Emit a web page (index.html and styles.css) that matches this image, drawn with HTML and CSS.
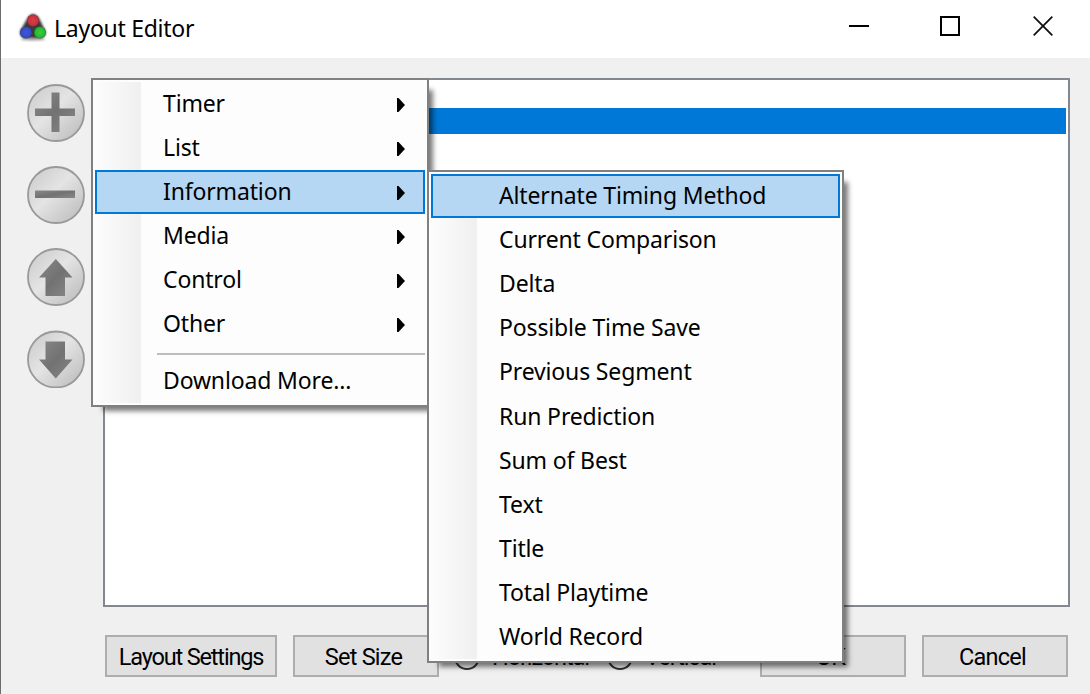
FILE: index.html
```
<!DOCTYPE html>
<html lang="en">
<head>
<meta charset="utf-8">
<title>Layout Editor</title>
<link rel="stylesheet" href="styles.css">
</head>
<body>
<div class="window">
  <header class="titlebar">
    <svg class="logo" width="30" height="32" viewBox="0 0 30 32">
      <defs>
        <filter id="soft"><feGaussianBlur stdDeviation="0.8"/></filter>
        <radialGradient id="red"><stop offset="0" stop-color="#dc3e48"/><stop offset=".8" stop-color="#c8323c"/><stop offset="1" stop-color="#8c2c32"/></radialGradient>
        <radialGradient id="blue"><stop offset="0" stop-color="#4058d8"/><stop offset=".8" stop-color="#344cc4"/><stop offset="1" stop-color="#2c3a88"/></radialGradient>
        <radialGradient id="green"><stop offset="0" stop-color="#35d03c"/><stop offset=".8" stop-color="#28b832"/><stop offset="1" stop-color="#247c2a"/></radialGradient>
      </defs>
      <path d="M5 25H25L27 28Q15 30 3 28Z" fill="#888" opacity=".6" filter="url(#soft)"/>
      <path d="M7 26H23Q29 24 27.500 19L21 6Q18 2 15 2Q12 2 9.500 6L2 19Q1 25 7 26Z" fill="#3a3a3a" filter="url(#soft)"/>
      <circle cx="15" cy="8.500" r="6" fill="url(#red)"/>
      <circle cx="8" cy="20.500" r="6" fill="url(#blue)"/>
      <circle cx="22" cy="20.500" r="6" fill="url(#green)"/>
    </svg>
    <h1 class="title">Layout Editor</h1>
    <div class="controls">
      <svg width="20" height="20" viewBox="0 0 20 20"><path d="M0 10H20" stroke="#000" stroke-width="2"/></svg>
      <svg width="20" height="20" viewBox="0 0 20 20"><path d="M1 1H19V19H1Z" fill="none" stroke="#000" stroke-width="2"/></svg>
      <svg width="20" height="20" viewBox="0 0 20 20"><path d="M.7 .7L19.300 19.300M19.300 .7L.7 19.300" stroke="#111" stroke-width="1.800"/></svg>
    </div>
  </header>
  <main class="body">
    <nav class="tools">
      <svg class="tool" viewBox="0 0 58 58">
        <defs>
          <linearGradient id="face" x1="0" y1="0" x2="1" y2="1"><stop offset="0" stop-color="#c8c8c8"/><stop offset=".45" stop-color="#e4e4e4"/><stop offset="1" stop-color="#b8b8b8"/></linearGradient>
          <linearGradient id="glyph" x1="0" y1="0" x2="1" y2="1"><stop offset="0" stop-color="#888"/><stop offset=".5" stop-color="#727272"/><stop offset="1" stop-color="#888"/></linearGradient>
        </defs>
        <circle class="disc" cx="29" cy="29" r="28"/><path class="glyph" d="M24.500 8.500H32.500V24.500H48V32H32.500V48H24.500V32H8V24.500H24.500Z"/>
      </svg>
      <svg class="tool" viewBox="0 0 58 58"><circle class="disc" cx="29" cy="29" r="28"/><path class="glyph" d="M8 24.500H48V32H8Z"/></svg>
      <svg class="tool" viewBox="0 0 58 58"><circle class="disc" cx="29" cy="29" r="28"/><path class="glyph" d="M28.800 11L45.500 29.500H38V48H18.500V29.500H12Z"/></svg>
      <svg class="tool" viewBox="0 0 58 58"><circle class="disc" cx="29" cy="29.500" r="28"/><path class="glyph" d="M18.500 11.500H38V29.500H45.500L28.800 48.500L12 29.500H18.500Z"/></svg>
    </nav>
    <section class="main">
      <div class="listbox"><div class="selected"></div></div>
      <footer class="footer">
        <button class="btn wide"><span>Layout Settings</span></button>
        <button class="btn"><span>Set Size</span></button>
        <div class="radios">
          <label class="radio"><i></i><span>Horizontal</span></label>
          <label class="radio"><i></i><span>Vertical</span></label>
        </div>
        <button class="btn"><span>OK</span></button>
        <button class="btn"><span>Cancel</span></button>
      </footer>
    </section>
  </main>

  <div class="menu menu-root">
    <div class="item"><span>Timer</span><svg class="arrow" viewBox="0 0 8 14"><path d="M0 0H1.500L8 7L1.500 14H0Z"/></svg></div>
    <div class="item"><span>List</span><svg class="arrow" viewBox="0 0 8 14"><path d="M0 0H1.500L8 7L1.500 14H0Z"/></svg></div>
    <div class="item active"><span>Information</span><svg class="arrow" viewBox="0 0 8 14"><path d="M0 0H1.500L8 7L1.500 14H0Z"/></svg></div>
    <div class="item"><span>Media</span><svg class="arrow" viewBox="0 0 8 14"><path d="M0 0H1.500L8 7L1.500 14H0Z"/></svg></div>
    <div class="item"><span>Control</span><svg class="arrow" viewBox="0 0 8 14"><path d="M0 0H1.500L8 7L1.500 14H0Z"/></svg></div>
    <div class="item"><span>Other</span><svg class="arrow" viewBox="0 0 8 14"><path d="M0 0H1.500L8 7L1.500 14H0Z"/></svg></div>
    <div class="separator"></div>
    <div class="item"><span>Download More...</span></div>
  </div>

  <div class="menu menu-sub">
    <div class="item active"><span>Alternate Timing Method</span></div>
    <div class="item"><span>Current Comparison</span></div>
    <div class="item"><span>Delta</span></div>
    <div class="item"><span>Possible Time Save</span></div>
    <div class="item"><span>Previous Segment</span></div>
    <div class="item"><span>Run Prediction</span></div>
    <div class="item"><span>Sum of Best</span></div>
    <div class="item"><span>Text</span></div>
    <div class="item"><span>Title</span></div>
    <div class="item"><span>Total Playtime</span></div>
    <div class="item"><span>World Record</span></div>
  </div>
</div>
</body>
</html>
```
FILE: styles.css
```
* { box-sizing: border-box; }
body { margin: 0; background: #f0f0f0; overflow: hidden; }
.window {
  position: relative;
  width: 1090px;
  height: 694px;
  border-left: 1px solid #6c6c6c;
  background: #f0f0f0;
  color: #000;
  font-family: "Noto Sans", "Open Sans", sans-serif;
}
.titlebar { display: flex; height: 58px; padding-left: 17px; background: #fff; }
.logo { margin-top: 12px; flex: none; }
.title { margin: 0 0 0 6px; font-size: 23px; font-weight: 400; line-height: 57px; letter-spacing: -.27px; white-space: nowrap; }
.controls { display: flex; gap: 73px; margin: 16px 37px 0 auto; }
.controls svg:first-child { margin-right: -2px; }
.body { display: flex; }
.tools { display: flex; flex-direction: column; gap: 24px; width: 102px; padding: 26px 0 0 26px; }
.tool { width: 58px; height: 58px; }
.disc { fill: url(#face); stroke: #999; stroke-width: 1.8; }
.glyph { fill: url(#glyph); }
.main { padding-top: 20px; }
.listbox { width: 967px; height: 529px; padding: 28px 2px; border: 2px solid #828790; background: #fff; }
.selected { height: 26px; background: #0078d7; }
.footer { display: flex; padding: 28px 0 0 2px; font-family: Roboto, "Liberation Sans", sans-serif; font-size: 23.5px; letter-spacing: -.75px; }
.btn {
  width: 146px;
  height: 42px;
  margin-right: 16px;
  padding: 2px 5px 0 0;
  border: 2px solid #adadad;
  background: #e1e1e1;
  color: #000;
  font: inherit;
  line-height: 36px;
  letter-spacing: inherit;
  white-space: nowrap;
}
.btn.wide { width: 172px; padding-right: 0; letter-spacing: -1.15px; }
.radios { display: flex; width: 305px; letter-spacing: -1.1px; }
.radio { display: flex; align-items: center; gap: 12px; width: 158px; height: 43px; margin-left: -1px; }
.radio + .radio { margin-left: 0; }
.radio i { flex: none; width: 26px; height: 26px; border: 2px solid #333; border-radius: 50%; background: #fff; }

.menu {
  position: absolute;
  padding: 2px;
  border: 2px solid #808080;
  background: linear-gradient(90deg, #fcfcfc, #f0f0f0) 2px 2px / 46px calc(100% - 4px) no-repeat #fdfdfd;
  box-shadow: 8px 8px 5px -4px rgba(0, 0, 0, .52);
  font-size: 23px;
  letter-spacing: -.15px;
}
.menu-root { left: 90px; top: 78px; width: 338px; height: 329px; }
.menu-sub { left: 426px; top: 170px; width: 417px; height: 493px; }
.item {
  display: flex;
  align-items: center;
  justify-content: space-between;
  height: 44px;
  padding: 0 18px 0 66px;
  border: 2px solid transparent;
  white-space: nowrap;
}
.item span { padding-bottom: 2px; }
.menu-sub .item { height: 44.1px; }
.item.active { border-color: #0078d7; background: #b5d7f3; }
.arrow { width: 8px; height: 14px; margin-top: 2px; }
.separator { height: 2px; margin: 7px 0 4px 62px; background: #bdbdbd; }
```
